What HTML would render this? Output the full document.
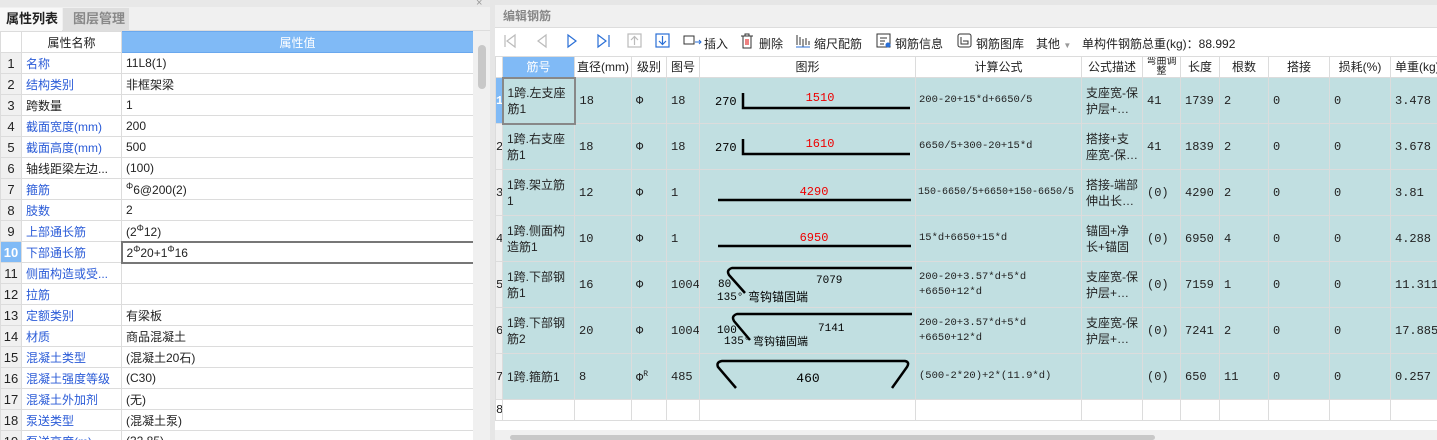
<!DOCTYPE html>
<html style="width:1437px;height:440px;overflow:hidden"><head><meta charset="utf-8"><style>
*{margin:0;padding:0;box-sizing:border-box}
body{width:1437px;height:440px;overflow:hidden;background:#fff;font-family:"Liberation Sans","Noto Sans CJK SC",sans-serif;font-size:12px;color:#222;position:relative}
.a{position:absolute}
table{border-collapse:collapse;table-layout:fixed}
td{border:1px solid #dcdcdc;overflow:hidden;white-space:nowrap;padding:0 4px}
#lt td{height:21px}
#lt td.n{background:#f0f0f0;text-align:center;padding:0;font-size:13px}
.b{color:#2a5bd7}
#rt td{height:46px;background:#c1dfe1;vertical-align:middle;font-family:"Liberation Mono","Noto Sans CJK SC",monospace;font-size:12px;white-space:normal;line-height:14px}
#rt td.f{font-size:10.5px;line-height:15px;padding:0 3px}
#rt td.s{font-family:"Liberation Sans","Noto Sans CJK SC",sans-serif;font-size:12px;line-height:16px}
#rt tr.h td{height:21px;background:#fff;text-align:center;font-family:"Liberation Sans","Noto Sans CJK SC",sans-serif;font-size:12px;white-space:nowrap}
#rt td.n{background:#f0f0f0;padding:0;font-size:12px;text-align:center}
#rt tr.e td{background:#fff;height:21px}
.tb span{position:absolute;top:35px;font-size:12px}
</style></head><body>
<div class="a" style="left:0;top:0;width:490px;height:7px;background:#e8e8e8"></div>
<div class="a" style="left:476px;top:-3px;color:#999;font-size:11px">×</div>
<div class="a" style="left:0;top:7px;width:490px;height:24px;background:#f0f0f0;border-bottom:1px solid #ddd"></div>
<div class="a" style="left:0;top:8px;width:62px;height:23px;background:#f8f8f8;font-weight:bold;font-size:13px;line-height:22px;padding-left:6px">属性列表</div>
<div class="a" style="left:63px;top:8px;width:66px;height:23px;background:#dedede;color:#888;font-weight:bold;font-size:13px;line-height:22px;padding-left:10px">图层管理</div>
<div class="a" style="left:0;top:31px;width:473px;height:409px;overflow:hidden">
<table id="lt" style="width:473px">
<colgroup><col style="width:21px"><col style="width:100px"><col style="width:352px"></colgroup>
<tr><td class="n" style="background:#fff"></td><td style="text-align:center">属性名称</td><td style="background:#80baf6;color:#fff;text-align:center;border-color:#6aa8ee">属性值</td></tr>
<tr><td class="n">1</td><td class="b">名称</td><td>11L8(1)</td></tr>
<tr><td class="n">2</td><td class="b">结构类别</td><td>非框架梁</td></tr>
<tr><td class="n">3</td><td>跨数量</td><td>1</td></tr>
<tr><td class="n">4</td><td class="b">截面宽度(mm)</td><td>200</td></tr>
<tr><td class="n">5</td><td class="b">截面高度(mm)</td><td>500</td></tr>
<tr><td class="n">6</td><td>轴线距梁左边...</td><td>(100)</td></tr>
<tr><td class="n">7</td><td class="b">箍筋</td><td><sup style="font-size:9px">Φ</sup>6@200(2)</td></tr>
<tr><td class="n">8</td><td class="b">肢数</td><td>2</td></tr>
<tr><td class="n">9</td><td class="b">上部通长筋</td><td>(2<sup style="font-size:9px">Φ</sup>12)</td></tr>
<tr><td class="n" style="background:#80baf6;color:#fff;font-weight:bold">10</td><td class="b">下部通长筋</td><td style="border:2px solid #777">2<sup style="font-size:9px">Φ</sup>20+1<sup style="font-size:9px">Φ</sup>16</td></tr>
<tr><td class="n">11</td><td class="b">侧面构造或受...</td><td></td></tr>
<tr><td class="n">12</td><td class="b">拉筋</td><td></td></tr>
<tr><td class="n">13</td><td class="b">定额类别</td><td>有梁板</td></tr>
<tr><td class="n">14</td><td class="b">材质</td><td>商品混凝土</td></tr>
<tr><td class="n">15</td><td class="b">混凝土类型</td><td>(混凝土20石)</td></tr>
<tr><td class="n">16</td><td class="b">混凝土强度等级</td><td>(C30)</td></tr>
<tr><td class="n">17</td><td class="b">混凝土外加剂</td><td>(无)</td></tr>
<tr><td class="n">18</td><td class="b">泵送类型</td><td>(混凝土泵)</td></tr>
<tr><td class="n">19</td><td class="b">泵送高度(m)</td><td>(32.85)</td></tr>
</table></div>
<div class="a" style="left:473px;top:31px;width:17px;height:409px;background:#f0f0f0"></div>
<div class="a" style="left:478px;top:45px;width:8px;height:44px;background:#c8c8c8;border-radius:4px"></div>
<div class="a" style="left:490px;top:0;width:5px;height:440px;background:#e6e6e6"></div>
<div class="a" style="left:495px;top:0;width:942px;height:5px;background:#e6e6e6"></div>
<div class="a" style="left:495px;top:5px;width:942px;height:23px;background:#f0f0f0;border-bottom:1px solid #ddd;color:#888;font-weight:bold;font-size:12px;line-height:22px;padding-left:8px">编辑钢筋</div>
<div class="tb">
<svg class="a" style="left:500px;top:33px" width="180" height="16">
<g fill="none" stroke-width="1.2">
<path d="M5 2v12M15 2l-8 6 8 6z" stroke="#bbb"/>
<path d="M46 2l-8 6 8 6z" stroke="#bbb"/>
<path d="M68 2l8 6-8 6z" stroke="#2a6fd6"/>
<path d="M98 2l8 6-8 6zM109 2v12" stroke="#2a6fd6"/>
<rect x="128" y="1" width="13" height="13" stroke="#bbb"/><path d="M134.5 12V4M131 7l3.5-3.5 3.5 3.5" stroke="#bbb"/>
<rect x="156" y="1" width="13" height="13" stroke="#2a6fd6"/><path d="M162.5 3v8M159 8l3.5 3.5 3.5-3.5" stroke="#2a6fd6"/>
</g></svg>
<svg class="a" style="left:683px;top:34px" width="20" height="14"><rect x="1" y="2" width="10" height="8" fill="none" stroke="#333"/><path d="M12 8h6M16 6l2 2-2 2" stroke="#2a6fd6" fill="none"/></svg>
<span style="left:704px">插入</span>
<svg class="a" style="left:740px;top:33px" width="14" height="16"><path d="M1 3h12M5 3V1h4v2M3 3v12h8V3" fill="none" stroke="#333"/><path d="M6 6v6M8 6v6" stroke="#d00"/></svg>
<span style="left:759px">删除</span>
<svg class="a" style="left:795px;top:34px" width="16" height="14"><path d="M2 1v10M5 3v8M8 5v8M11 4v7M14 7v4" stroke="#333" fill="none"/><path d="M1 13h14" stroke="#2a6fd6"/></svg>
<span style="left:814px">缩尺配筋</span>
<svg class="a" style="left:876px;top:33px" width="16" height="16"><rect x="1" y="1" width="13" height="13" fill="none" stroke="#333"/><path d="M4 5h7M4 8h5M4 11h4" stroke="#333"/><circle cx="12" cy="12" r="2.5" fill="#2a6fd6"/></svg>
<span style="left:895px">钢筋信息</span>
<svg class="a" style="left:957px;top:33px" width="16" height="16"><rect x="1" y="1" width="13" height="13" rx="2" fill="none" stroke="#333"/><path d="M4 4v7h7v-3H6" fill="none" stroke="#333"/></svg>
<span style="left:976px">钢筋图库</span>
<span style="left:1036px">其他 <span style="position:static;color:#999;font-size:8px">▼</span></span>
<span style="left:1082px">单构件钢筋总重(kg)：88.992</span>
</div>
<table id="rt" class="a" style="left:495px;top:56px;width:1000px">
<colgroup><col style="width:7px"><col style="width:72px"><col style="width:57px"><col style="width:35px"><col style="width:33px"><col style="width:216px"><col style="width:166px"><col style="width:61px"><col style="width:38px"><col style="width:39px"><col style="width:49px"><col style="width:61px"><col style="width:61px"><col style="width:105px"></colgroup>
<tr class="h"><td class="n" style="background:#fff"></td><td style="background:#80baf6;color:#fff">筋号</td><td style="padding:0">直径(mm)</td><td>级别</td><td>图号</td><td>图形</td><td>计算公式</td><td>公式描述</td><td style="font-size:10px;line-height:10px;padding:0;white-space:normal">弯曲调整</td><td>长度</td><td>根数</td><td>搭接</td><td>损耗(%)</td><td style="text-align:left">单重(kg)</td></tr>
<tr><td class="n" style="background:#80baf6;color:#fff;font-weight:bold">1</td><td class="s" style="border:2px solid #888">1跨.左支座筋1</td><td>18</td><td>Φ</td><td>18</td><td></td><td class="f">200-20+15*d+6650/5</td><td class="s">支座宽-保护层+…</td><td>41</td><td>1739</td><td>2</td><td>0</td><td>0</td><td>3.478</td></tr>
<tr><td class="n">2</td><td class="s">1跨.右支座筋1</td><td>18</td><td>Φ</td><td>18</td><td></td><td class="f">6650/5+300-20+15*d</td><td class="s">搭接+支座宽-保…</td><td>41</td><td>1839</td><td>2</td><td>0</td><td>0</td><td>3.678</td></tr>
<tr><td class="n">3</td><td class="s">1跨.架立筋1</td><td>12</td><td>Φ</td><td>1</td><td></td><td class="f" style="white-space:nowrap;padding:0 2px;font-size:10px">150-6650/5+6650+150-6650/5</td><td class="s">搭接-端部伸出长…</td><td>(0)</td><td>4290</td><td>2</td><td>0</td><td>0</td><td>3.81</td></tr>
<tr><td class="n">4</td><td class="s">1跨.侧面构造筋1</td><td>10</td><td>Φ</td><td>1</td><td></td><td class="f">15*d+6650+15*d</td><td class="s">锚固+净长+锚固</td><td>(0)</td><td>6950</td><td>4</td><td>0</td><td>0</td><td>4.288</td></tr>
<tr><td class="n">5</td><td class="s">1跨.下部钢筋1</td><td>16</td><td>Φ</td><td>1004</td><td></td><td class="f">200-20+3.57*d+5*d +6650+12*d</td><td class="s">支座宽-保护层+…</td><td>(0)</td><td>7159</td><td>1</td><td>0</td><td>0</td><td>11.311</td></tr>
<tr><td class="n">6</td><td class="s">1跨.下部钢筋2</td><td>20</td><td>Φ</td><td>1004</td><td></td><td class="f">200-20+3.57*d+5*d +6650+12*d</td><td class="s">支座宽-保护层+…</td><td>(0)</td><td>7241</td><td>2</td><td>0</td><td>0</td><td>17.885</td></tr>
<tr><td class="n">7</td><td class="s">1跨.箍筋1</td><td>8</td><td>Φ<sup style="font-size:8px">R</sup></td><td>485</td><td></td><td class="f">(500-2*20)+2*(11.9*d)</td><td></td><td>(0)</td><td>650</td><td>11</td><td>0</td><td>0</td><td>0.257</td></tr>
<tr class="e"><td class="n">8</td><td></td><td></td><td></td><td></td><td></td><td></td><td></td><td></td><td></td><td></td><td></td><td></td><td></td></tr>
</table>
<svg class="a" style="left:699px;top:77px" width="216" height="322" font-family="Liberation Mono,monospace">
<g stroke="#000" stroke-width="2.5" fill="none">
<path d="M44 16v15h167"/>
<path d="M44 62v15h167"/>
<path d="M19 123h193"/>
<path d="M19 169h193"/>
<path d="M213 191H33q-6 2-3 7l16 18"/>
<path d="M213 237H38q-6 2-3 7l16 19"/>
<path d="M37 311L19 290q-2-5 4-6h183q5 1 2 6L193 311"/>
</g>
<g font-size="12" fill="#e00" text-anchor="middle"><text x="121" y="24">1510</text><text x="121" y="70">1610</text><text x="115" y="118">4290</text><text x="115" y="164">6950</text></g>
<g font-size="12" fill="#000"><text x="16" y="28">270</text><text x="16" y="74">270</text>
<text x="19" y="210" font-size="11">80</text><text x="18" y="223" font-size="11">135°</text><text x="49" y="224" font-family="Liberation Sans,Noto Sans CJK SC" font-size="12">弯钩锚固端</text><text x="117" y="206" font-size="11">7079</text>
<text x="18" y="256" font-size="11">100</text><text x="25" y="267" font-size="11">135°</text><text x="54" y="268" font-family="Liberation Sans,Noto Sans CJK SC" font-size="11">弯钩锚固端</text><text x="119" y="254" font-size="11">7141</text>
<text x="109" y="305" font-size="13" text-anchor="middle">460</text></g>
</svg>
<div class="a" style="left:495px;top:430px;width:942px;height:10px;background:#f0f0f0"></div>
<div class="a" style="left:510px;top:435px;width:645px;height:5px;background:#c8c8c8;border-radius:3px"></div>
</body></html>
